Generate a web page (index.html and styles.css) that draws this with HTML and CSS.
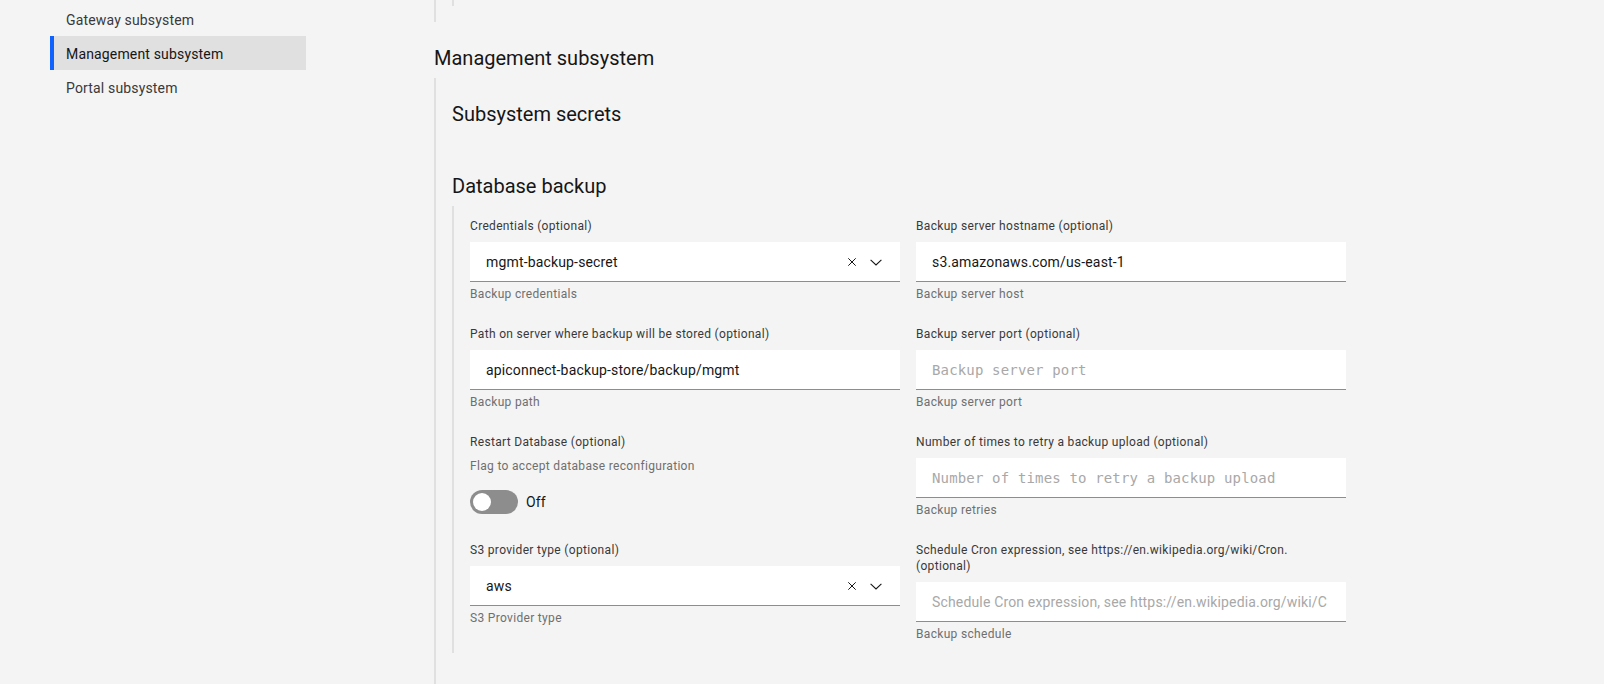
FILE: index.html
```html
<!DOCTYPE html>
<html lang="en">
<head>
<meta charset="utf-8">
<title>Management subsystem</title>
<link rel="stylesheet" href="styles.css">
</head>
<body>
<div class="page">
  <nav class="sidenav">
    <div class="nav-item">Gateway subsystem</div>
    <div class="nav-item active">Management subsystem</div>
    <div class="nav-item">Portal subsystem</div>
  </nav>
  <main class="main">
    <div class="section-body prev">
      <div class="sub-body prev-sub"></div>
    </div>
    <h2 class="section-title">Management subsystem</h2>
    <div class="section-body outer">
      <h3 class="section-title">Subsystem secrets</h3>
      <div class="sub-empty"></div>
      <h3 class="section-title">Database backup</h3>
      <div class="sub-body form-grid">
        <div class="field">
          <div class="label">Credentials (optional)</div>
          <div class="input combo">
            <span class="value">mgmt-backup-secret</span>
            <svg class="icon" viewBox="0 0 16 16" width="16" height="16"><path d="M4.3 4.3 L11.7 11.7 M11.7 4.3 L4.3 11.7" stroke="#161616" stroke-width="1" fill="none"/></svg>
            <svg class="icon" viewBox="0 0 16 16" width="16" height="16"><path d="M2.6 5.8 L8 11 L13.4 5.8" stroke="#161616" stroke-width="1.1" fill="none"/></svg>
          </div>
          <div class="helper">Backup credentials</div>
        </div>
        <div class="field">
          <div class="label">Backup server hostname (optional)</div>
          <div class="input"><span class="value">s3.amazonaws.com/us-east-1</span></div>
          <div class="helper">Backup server host</div>
        </div>
        <div class="field">
          <div class="label">Path on server where backup will be stored (optional)</div>
          <div class="input"><span class="value">apiconnect-backup-store/backup/mgmt</span></div>
          <div class="helper">Backup path</div>
        </div>
        <div class="field">
          <div class="label">Backup server port (optional)</div>
          <div class="input"><span class="placeholder mono">Backup server port</span></div>
          <div class="helper">Backup server port</div>
        </div>
        <div class="field">
          <div class="label">Restart Database (optional)</div>
          <div class="helper desc">Flag to accept database reconfiguration</div>
          <div class="toggle-row">
            <div class="switch"><div class="knob"></div></div>
            <span class="toggle-text">Off</span>
          </div>
        </div>
        <div class="field">
          <div class="label">Number of times to retry a backup upload (optional)</div>
          <div class="input"><span class="placeholder mono">Number of times to retry a backup upload</span></div>
          <div class="helper">Backup retries</div>
        </div>
        <div class="field">
          <div class="label">S3 provider type (optional)</div>
          <div class="input combo">
            <span class="value">aws</span>
            <svg class="icon" viewBox="0 0 16 16" width="16" height="16"><path d="M4.3 4.3 L11.7 11.7 M11.7 4.3 L4.3 11.7" stroke="#161616" stroke-width="1" fill="none"/></svg>
            <svg class="icon" viewBox="0 0 16 16" width="16" height="16"><path d="M2.6 5.8 L8 11 L13.4 5.8" stroke="#161616" stroke-width="1.1" fill="none"/></svg>
          </div>
          <div class="helper">S3 Provider type</div>
        </div>
        <div class="field">
          <div class="label">Schedule Cron expression, see https://en.wikipedia.org/wiki/Cron.<br>(optional)</div>
          <div class="input"><span class="placeholder">Schedule Cron expression, see https://en.wikipedia.org/wiki/C</span></div>
          <div class="helper">Backup schedule</div>
        </div>
      </div>
    </div>
  </main>
</div>
</body>
</html>
```

FILE: styles.css
```css
html, body {
  margin: 0;
  padding: 0;
}

body {
  background: #f4f4f4;
  color: #161616;
  font-family: Roboto, "Noto Sans", "Liberation Sans", sans-serif;
  overflow: hidden;
}

.page {
  display: flex;
  min-height: 684px;
  height: 684px;
}

.sidenav {
  width: 256px;
  margin-left: 50px;
  padding-top: 2px;
  flex: none;
}

.nav-item {
  height: 34px;
  display: flex;
  align-items: center;
  padding-left: 16px;
  padding-top: 1px;
  box-sizing: border-box;
  font-size: 14px;
  letter-spacing: 0.16px;
  color: #393939;
}

.nav-item.active {
  background: #e0e0e0;
  box-shadow: inset 4px 0 0 #0f62fe;
  color: #161616;
}

.main {
  margin-left: 128px;
  display: flex;
  flex-direction: column;
  flex: 1;
}

.section-body {
  display: flex;
  flex-direction: column;
  border-left: 2px solid #e0e0e0;
  padding-left: 16px;
}

.prev {
  padding-bottom: 16px;
}

.prev-sub {
  height: 6px;
}

.outer {
  flex: 1;
}

.section-title {
  font-size: 20px;
  line-height: 28px;
  font-weight: 400;
  margin: 22px 0 6px;
  color: #161616;
  letter-spacing: 0;
}

.sub-empty {
  height: 16px;
}

.sub-body {
  border-left: 2px solid #e0e0e0;
}

.form-grid {
  display: grid;
  grid-template-columns: 430px 430px;
  column-gap: 16px;
  row-gap: 24px;
  align-items: start;
  padding: 12px 0 11px 16px;
}

.field {
  display: flex;
  flex-direction: column;
}

.label {
  font-size: 12px;
  line-height: 16px;
  letter-spacing: 0.32px;
  color: #393939;
}

.helper {
  font-size: 12px;
  line-height: 16px;
  letter-spacing: 0.32px;
  color: #6f6f6f;
  margin-top: 4px;
}

.helper.desc {
  margin-top: 8px;
}

.input {
  margin-top: 8px;
  height: 40px;
  box-sizing: border-box;
  background: #ffffff;
  border-bottom: 1px solid #8d8d8d;
  padding: 0 16px;
  display: flex;
  align-items: center;
  font-size: 14px;
  letter-spacing: 0.16px;
  overflow: hidden;
}

.value {
  flex: 1;
  white-space: nowrap;
  overflow: hidden;
  color: #161616;
}

.placeholder {
  flex: 1;
  white-space: nowrap;
  overflow: hidden;
  color: #a8a8a8;
}

.mono {
  font-family: "DejaVu Sans Mono", "Liberation Mono", monospace;
  font-size: 14px;
}

.combo {
  gap: 8px;
}

.icon {
  flex: none;
  display: block;
}

.toggle-row {
  margin-top: 16px;
  display: flex;
  align-items: center;
  gap: 8px;
}

.switch {
  width: 48px;
  height: 24px;
  box-sizing: border-box;
  border-radius: 12px;
  background: #8d8d8d;
  display: flex;
  align-items: center;
  padding: 0 3px;
}

.knob {
  width: 18px;
  height: 18px;
  border-radius: 50%;
  background: #ffffff;
}

.toggle-text {
  font-size: 14px;
  letter-spacing: 0.16px;
  color: #161616;
}
```
